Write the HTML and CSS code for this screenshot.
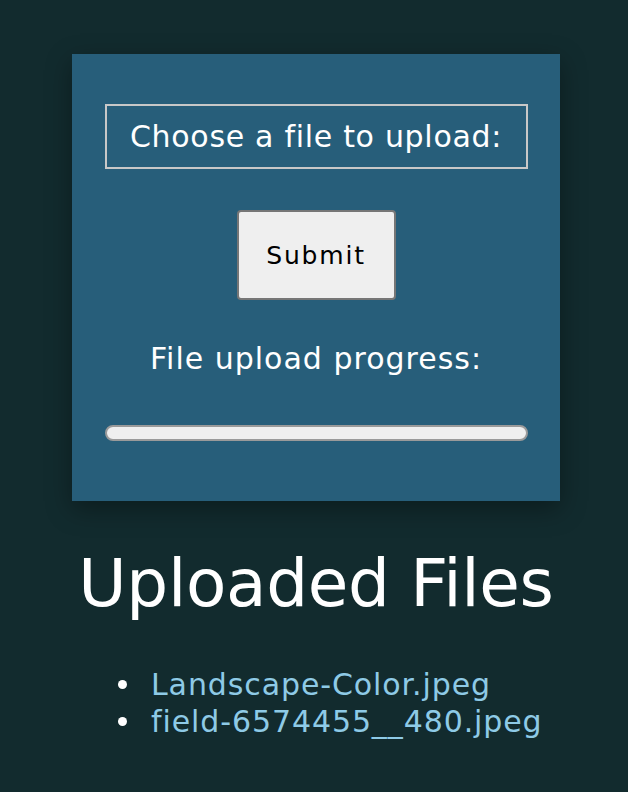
FILE: index.html
```html
<!DOCTYPE html>
<html lang="en">
<head>
<meta charset="utf-8">
<title>Upload</title>
<link rel="stylesheet" href="styles.css">
</head>
<body>
<main class="page">
  <form class="card">
    <label class="file-label">Choose a file to upload:</label>
    <button type="button" class="submit">Submit</button>
    <p class="progress-label">File upload progress:</p>
    <div class="progress"></div>
  </form>
  <h1 class="title">Uploaded Files</h1>
  <ul class="files">
    <li><a href="#">Landscape-Color.jpeg</a></li>
    <li><a href="#">field-6574455__480.jpeg</a></li>
  </ul>
</main>
</body>
</html>
```
FILE: styles.css
```css
html, body {
  margin: 0;
  padding: 0;
  background: #122b2e;
}
body {
  font-family: "DejaVu Sans", sans-serif;
  color: #ffffff;
}
.page {
  display: flex;
  flex-direction: column;
  align-items: center;
  padding: 54px 0 0 4px;
}
.card {
  width: 488px;
  height: 447px;
  box-sizing: border-box;
  background: #275e7a;
  box-shadow: 0 8px 24px rgba(0, 0, 0, 0.35);
  padding: 50px 32px 0 32px;
  display: flex;
  flex-direction: column;
  align-items: center;
}
.file-label {
  display: block;
  width: 423px;
  height: 65px;
  box-sizing: border-box;
  border: 2px solid #c8c8c8;
  text-align: center;
  font-size: 30px;
  letter-spacing: 0.7px;
  line-height: 61px;
  color: #fff;
}
.submit {
  margin-top: 41px;
  width: 159px;
  height: 90px;
  background: #efefef;
  border: 2px solid #767676;
  border-radius: 4px;
  font-family: "DejaVu Sans", sans-serif;
  font-size: 25px;
  letter-spacing: 1.8px;
  color: #000;
  padding: 0;
}
.progress-label {
  margin: 42px 0 0 0;
  font-size: 30px;
  letter-spacing: 1px;
  line-height: 34px;
}
.progress {
  margin-top: 49px;
  width: 423px;
  height: 16px;
  box-sizing: border-box;
  background: #efefef;
  border: 2px solid #9a9a9a;
  border-radius: 8px;
}
.title {
  margin: 43px 0 0 0;
  font-size: 66px;
  font-weight: normal;
  letter-spacing: -0.3px;
  line-height: 80px;
}
.files {
  list-style: none;
  margin: 42px 0 0 114px;
  padding: 0;
  align-self: flex-start;
  font-size: 30px;
  letter-spacing: 0.9px;
  line-height: 37px;
}
.files li {
  display: flex;
  align-items: center;
  gap: 24px;
}
.files li::before {
  content: "";
  width: 9px;
  height: 9px;
  border-radius: 50%;
  background: #ffffff;
  flex: none;
}
.files a {
  color: #8ecae6;
  text-decoration: none;
}
```
